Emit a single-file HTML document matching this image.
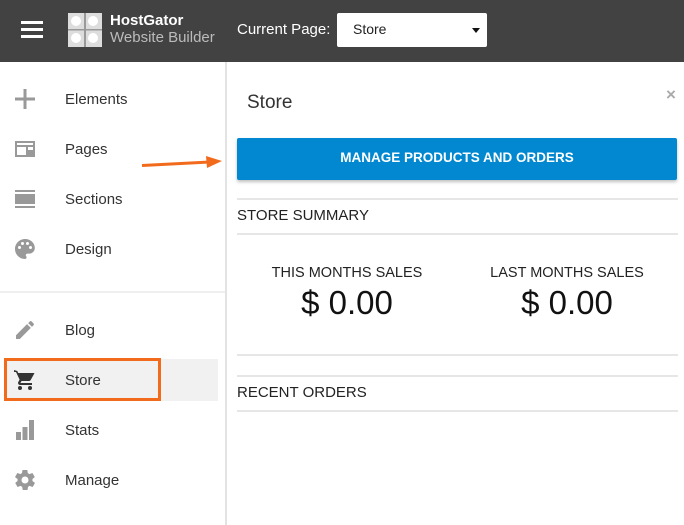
<!DOCTYPE html>
<html><head><style>
*{margin:0;padding:0;box-sizing:border-box}
body{width:684px;height:525px;overflow:hidden;background:#fff;font-family:"Liberation Sans",Arial,sans-serif;position:relative;color:#222}
.a{position:absolute}
.hdr{left:0;top:0;width:684px;height:62px;background:#424242}
.nav{left:65px;font-size:15px;color:#333;line-height:20px}
.ic{left:13px;width:24px;height:24px}
.line{left:237px;width:441px;height:2px;background:#e6e6e6}
</style></head><body>
<div class="a hdr"></div>
<div class="a" style="left:21px;top:21px;width:22px;height:3px;background:#fff"></div>
<div class="a" style="left:21px;top:28px;width:22px;height:3px;background:#fff"></div>
<div class="a" style="left:21px;top:35px;width:22px;height:3px;background:#fff"></div>
<svg class="a" style="left:68px;top:13px" width="34" height="34" viewBox="0 0 34 34">
<rect width="34" height="34" fill="#ddd"/>
<rect x="16" y="0" width="2" height="34" fill="#999"/><rect x="0" y="16" width="34" height="1.5" fill="#999"/>
<circle cx="8" cy="8" r="5" fill="#fff"/><circle cx="25" cy="8" r="5" fill="#fff"/>
<circle cx="8" cy="25" r="5" fill="#fff"/><circle cx="25" cy="25" r="5" fill="#fff"/>
</svg>
<div class="a" style="left:110px;top:12px;font-size:15px;font-weight:bold;color:#fff;line-height:18px">HostGator</div>
<div class="a" style="left:110px;top:29px;font-size:15px;color:#bbb;line-height:18px">Website Builder</div>
<div class="a" style="left:237px;top:21px;font-size:15px;color:#fff;line-height:18px">Current Page:</div>
<div class="a" style="left:337px;top:13px;width:150px;height:34px;background:#fff;border-radius:2px"></div>
<div class="a" style="left:353px;top:21px;font-size:14px;color:#222;line-height:17px">Store</div>
<div class="a" style="left:472px;top:28px;width:0;height:0;border-left:4.5px solid transparent;border-right:4.5px solid transparent;border-top:5px solid #111"></div>

<div class="a" style="left:225px;top:62px;width:2px;height:463px;background:#e3e3e3"></div>
<div class="a" style="left:0;top:291px;width:225px;height:2px;background:#efefef"></div>
<div class="a" style="left:5px;top:359px;width:213px;height:42px;background:#f1f1f1"></div>
<div class="a" style="left:4px;top:358px;width:157px;height:43px;border:3px solid #f26b1d"></div>

<svg class="a ic" style="top:87px" viewBox="0 0 24 24"><path d="M10.5 2h3v20h-3zM2 10.5h20v3H2z" fill="#999"/></svg>
<svg class="a ic" style="top:137px" viewBox="0 0 24 24"><path d="M2 4h20v16H2zM4 10v8h9v-8zm11 0v3h5v-3zM4 6v2h16V6z" fill="#999" fill-rule="evenodd"/></svg>
<svg class="a ic" style="top:187px" viewBox="0 0 24 24"><path d="M2 3h20v2H2zM2 7h20v10H2zM2 19h20v2H2z" fill="#999"/></svg>
<svg class="a ic" style="top:237px" viewBox="0 0 24 24"><path d="M12 2C6.5 2 2 6.5 2 12s4.5 10 10 10c.9 0 1.6-.7 1.6-1.6 0-.4-.2-.8-.4-1.1-.3-.3-.4-.7-.4-1.1 0-.9.7-1.6 1.6-1.6h1.9c3 0 5.5-2.5 5.5-5.5C22 6 17.5 2 12 2zM6.5 12a1.5 1.5 0 110-3 1.5 1.5 0 010 3zm3-4a1.5 1.5 0 110-3 1.5 1.5 0 010 3zm5 0a1.5 1.5 0 110-3 1.5 1.5 0 010 3zm3 4a1.5 1.5 0 110-3 1.5 1.5 0 010 3z" fill="#999"/></svg>
<svg class="a ic" style="top:318px" viewBox="0 0 24 24"><path d="M3 17.2V21h3.8L17.8 9.9l-3.8-3.8zM20.7 7c.4-.4.4-1 0-1.4l-2.3-2.3c-.4-.4-1-.4-1.4 0l-1.8 1.8 3.8 3.8z" fill="#999"/></svg>
<svg class="a ic" style="top:368px" viewBox="0 0 24 24"><path d="M7 18a2 2 0 100 4 2 2 0 000-4zM1 2v2h2l3.6 7.6-1.3 2.4C5.1 14.3 5 14.7 5 15c0 1.1.9 2 2 2h12v-2H7.4l1.1-2h7.5c.8 0 1.4-.4 1.700-1l3.6-6.5L21.3 5H5.2l-.9-2zM17 18a2 2 0 100 4 2 2 0 000-4z" fill="#333"/></svg>
<svg class="a ic" style="top:418px" viewBox="0 0 24 24"><path d="M3 14h5v8H3zM9.5 9h5v13h-5zM16 2h5v20h-5z" fill="#999"/></svg>
<svg class="a ic" style="top:468px" viewBox="0 0 24 24"><path d="M19.4 13c0-.3.1-.6.1-1s0-.7-.1-1l2.1-1.6c.2-.2.2-.4.1-.6l-2-3.5c-.1-.2-.4-.3-.6-.2l-2.5 1c-.5-.4-1.100-.7-1.700-1l-.4-2.6c0-.3-.2-.5-.5-.5h-4c-.2 0-.5.2-.5.4l-.4 2.7c-.6.2-1.1.6-1.7 1l-2.5-1c-.2-.1-.5 0-.6.2l-2 3.5c-.1.2-.1.5.1.6L4.6 11c0 .3-.1.6-.1 1s0 .7.1 1l-2.1 1.6c-.2.2-.2.4-.1.6l2 3.5c.1.2.4.3.6.2l2.5-1c.5.4 1.1.7 1.7 1l.4 2.7c0 .2.2.4.5.4h4c.2 0 .5-.2.5-.4l.4-2.7c.6-.3 1.2-.6 1.7-1l2.5 1c.2.1.5 0 .6-.2l2-3.5c.1-.2.1-.5-.1-.6zM12 15.5a3.5 3.5 0 110-7 3.5 3.5 0 010 7z" fill="#999"/></svg>

<div class="a nav" style="top:90px">Elements</div>
<div class="a nav" style="top:140px">Pages</div>
<div class="a nav" style="top:190px">Sections</div>
<div class="a nav" style="top:240px">Design</div>
<div class="a nav" style="top:321px">Blog</div>
<div class="a nav" style="top:371px">Store</div>
<div class="a nav" style="top:421px">Stats</div>
<div class="a nav" style="top:471px">Manage</div>

<svg class="a" style="left:140px;top:152px" width="84" height="20" viewBox="0 0 84 20"><path d="M2 13.5L70 10" stroke="#f26b1d" stroke-width="3"/><path d="M66 4L82 9 67 16z" fill="#f26b1d"/></svg>

<div class="a" style="left:247px;top:92px;font-size:19px;color:#333;line-height:22px">Store</div>
<div class="a" style="left:666px;top:86px;font-size:17px;color:#aaa;font-weight:bold;line-height:18px">×</div>
<div class="a" style="left:237px;top:138px;width:440px;height:42px;background:#0288d1;border-radius:2px;box-shadow:0 2px 3px rgba(0,0,0,.25);color:#fff;font-weight:bold;font-size:13.5px;text-align:center;line-height:40px">MANAGE PRODUCTS AND ORDERS</div>
<div class="a line" style="top:198px"></div>
<div class="a" style="left:237px;top:207px;font-size:15px;line-height:18px;color:#222">STORE SUMMARY</div>
<div class="a line" style="top:233px"></div>
<div class="a" style="left:237px;top:265px;width:220px;text-align:center;font-size:14.5px;line-height:17px">THIS MONTHS SALES</div>
<div class="a" style="left:457px;top:265px;width:220px;text-align:center;font-size:14.5px;line-height:17px">LAST MONTHS SALES</div>
<div class="a" style="left:237px;top:283px;width:220px;text-align:center;font-size:33px;line-height:40px;color:#111">$ 0.00</div>
<div class="a" style="left:457px;top:283px;width:220px;text-align:center;font-size:33px;line-height:40px;color:#111">$ 0.00</div>
<div class="a line" style="top:354px"></div>
<div class="a line" style="top:375px"></div>
<div class="a" style="left:237px;top:384px;font-size:15px;line-height:18px;color:#222">RECENT ORDERS</div>
<div class="a line" style="top:410px"></div>
</body></html>
